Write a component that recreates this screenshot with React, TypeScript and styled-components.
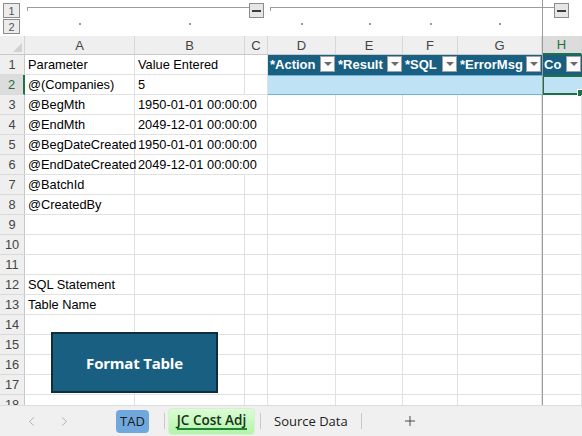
import styled, { createGlobalStyle, css } from "styled-components";
import { ChevronLeft, ChevronRight, Plus } from "lucide-react";

const COLS = "25px 110px 110px 23px 68px 67px 55px 84px 1fr";
const LETTERS = ["A", "B", "C", "D", "E", "F", "G", "H"];

type Row = { a?: string; b?: string };

const rows: Row[] = [
  { a: "Parameter", b: "Value Entered" },
  { a: "@(Companies)", b: "5" },
  { a: "@BegMth", b: "1950-01-01 00:00:00" },
  { a: "@EndMth", b: "2049-12-01 00:00:00" },
  { a: "@BegDateCreated", b: "1950-01-01 00:00:00" },
  { a: "@EndDateCreated", b: "2049-12-01 00:00:00" },
  { a: "@BatchId" },
  { a: "@CreatedBy" },
  {},
  {},
  {},
  { a: "SQL Statement" },
  { a: "Table Name" },
  {},
  {},
  {},
  {},
  {},
];

const tableHeads = ["*Action", "*Result", "*SQL", "*ErrorMsg", "Co"];

// dates are wider than column B and spill into the empty C column
const spills = (text?: string) => !!text && text.length > 15;

const App = () => {
  return (
    <Page>
      <GlobalStyle />
      <OutlineBar>
        <LevelButtons>
          <LevelButton>1</LevelButton>
          <LevelButton>2</LevelButton>
        </LevelButtons>
        <Group $from={2} $to={5} $padRight={4}>
          <GroupLine />
          <CollapseButton>
            <MinusBar />
          </CollapseButton>
        </Group>
        <Group $from={5} $to={10} $padRight={13}>
          <GroupLine />
          <CollapseButton>
            <MinusBar />
          </CollapseButton>
        </Group>
        {[2, 3, 5, 6, 7, 8].map((c) => (
          <DotCell key={c} $col={c}>
            <Dot />
          </DotCell>
        ))}
      </OutlineBar>

      <Sheet>
        <Grid>
          <Corner />
          {LETTERS.map((l) => (
            <ColHeader key={l} $active={l === "H"}>
              {l}
            </ColHeader>
          ))}

          {rows.map((row, i) => {
            const n = i + 1;
            return [
              <RowHeader key={`h${n}`} $active={n === 2}>
                {n}
              </RowHeader>,
              <Cell key={`a${n}`}>{row.a}</Cell>,
              <Cell key={`b${n}`} $spill={spills(row.b)}>
                {row.b}
              </Cell>,
              <Cell key={`c${n}`} />,
              ...[0, 1, 2, 3, 4].map((k) => {
                if (n === 1)
                  return (
                    <HeadCell key={`t${n}${k}`}>
                      <HeadText>{tableHeads[k]}</HeadText>
                      <FilterButton>
                        <FilterArrow />
                      </FilterButton>
                    </HeadCell>
                  );
                if (n === 2)
                  return k === 4 ? (
                    <SelectedCell key={`t${n}${k}`} />
                  ) : (
                    <BandCell key={`t${n}${k}`} />
                  );
                return <Cell key={`t${n}${k}`} />;
              }),
            ];
          })}
        </Grid>
        <FormatButton>Format Table</FormatButton>
      </Sheet>

      <TabBar>
        <NavGroup>
          <ChevronLeft size={15} strokeWidth={1.4} color="#a6a6a6" />
          <ChevronRight size={15} strokeWidth={1.4} color="#a6a6a6" />
        </NavGroup>
        <ColorTab>TAD</ColorTab>
        <Separator />
        <ActiveTab>
          JC Cost Adj
          <Underline />
        </ActiveTab>
        <Separator />
        <SheetTab>Source Data</SheetTab>
        <Separator />
        <AddTab>
          <Plus size={16} strokeWidth={1.3} color="#333" />
        </AddTab>
      </TabBar>

      <FreezeLine />
    </Page>
  );
};

export default App;

const GlobalStyle = createGlobalStyle`
  html, body {
    margin: 0;
    padding: 0;
    background: #ffffff;
  }
  body {
    font-family: "Liberation Sans", Arial, sans-serif;
  }
  * {
    box-sizing: border-box;
  }
`;

const Page = styled.div`
  position: relative;
  width: 582px;
  height: 436px;
  display: flex;
  flex-direction: column;
  overflow: hidden;
  background: #ffffff;
`;

const OutlineBar = styled.div`
  height: 36px;
  display: grid;
  grid-template-columns: ${COLS};
  grid-template-rows: 18px 18px;
`;

const LevelButtons = styled.div`
  grid-column: 1;
  grid-row: 1 / 3;
  display: flex;
  flex-direction: column;
  gap: 1px;
  padding: 3px 0 0 3px;
`;

const LevelButton = styled.div`
  width: 17px;
  height: 15px;
  border: 1px solid #8c8c8c;
  background: #ececec;
  color: #555;
  font-size: 11px;
  display: flex;
  align-items: center;
  justify-content: center;
`;

const Group = styled.div<{ $from: number; $to: number; $padRight: number }>`
  grid-row: 1;
  grid-column: ${(p) => p.$from} / ${(p) => p.$to};
  display: flex;
  align-items: flex-start;
  padding: 3px ${(p) => p.$padRight}px 0 2px;
`;

const GroupLine = styled.div`
  flex: 1;
  margin-top: 4px;
  height: 4px;
  border-top: 1px solid #9c9c9c;
  border-left: 1px solid #9c9c9c;
`;

const CollapseButton = styled.div`
  width: 15px;
  height: 15px;
  border: 1px solid #8c8c8c;
  background: #e6e6e6;
  display: flex;
  align-items: center;
  justify-content: center;
`;

const MinusBar = styled.div`
  width: 9px;
  height: 2px;
  background: #3c3c3c;
`;

const DotCell = styled.div<{ $col: number }>`
  grid-row: 2;
  grid-column: ${(p) => p.$col};
  display: flex;
  justify-content: center;
  padding-top: 5px;
`;

const Dot = styled.div`
  width: 2px;
  height: 2px;
  background: #9a9a9a;
`;

const Sheet = styled.div`
  position: relative;
  flex: 1;
  overflow: hidden;
`;

const Grid = styled.div`
  display: grid;
  grid-template-columns: ${COLS};
  grid-template-rows: 19px;
  grid-auto-rows: 20px;
  font-size: 12.8px;
`;

const headerBase = css`
  background: #efefef;
  color: #444;
  display: flex;
  align-items: center;
  justify-content: center;
  font-size: 13px;
`;

const Corner = styled.div`
  ${headerBase};
  position: relative;
  border-right: 1px solid #d4d4d4;
  border-bottom: 1px solid #c8c8c8;

  &::after {
    content: "";
    position: absolute;
    right: 2px;
    bottom: 2px;
    border-left: 9px solid transparent;
    border-bottom: 9px solid #d2d2d2;
  }
`;

const ColHeader = styled.div<{ $active?: boolean }>`
  ${headerBase};
  border-right: 1px solid #d8d8d8;
  border-bottom: ${(p) => (p.$active ? "2px solid #1e7145" : "1px solid #c8c8c8")};
  ${(p) =>
    p.$active &&
    css`
      background: #dcdcdc;
      color: #1e7145;
    `}
`;

const RowHeader = styled.div<{ $active?: boolean }>`
  ${headerBase};
  font-size: 12.8px;
  border-bottom: 1px solid #dadada;
  border-right: ${(p) => (p.$active ? "2px solid #1e7145" : "1px solid #c8c8c8")};
  ${(p) =>
    p.$active &&
    css`
      background: #dcdcdc;
      color: #1e7145;
    `}
`;

const Cell = styled.div<{ $spill?: boolean }>`
  display: flex;
  align-items: flex-end;
  padding: 0 0 2px 3px;
  border-right: 1px solid ${(p) => (p.$spill ? "transparent" : "#e1e1e1")};
  border-bottom: 1px solid #e1e1e1;
  color: #000;
  white-space: nowrap;
  overflow: visible;
  position: relative;
  z-index: ${(p) => (p.$spill ? 1 : 0)};
`;

const HeadCell = styled.div`
  display: flex;
  align-items: flex-start;
  justify-content: space-between;
  padding: 1px 1px 0 2px;
  background: #185f81;
  color: #ffffff;
  font-weight: 700;
  font-size: 13px;
  overflow: hidden;
  white-space: nowrap;
`;

const HeadText = styled.span`
  line-height: 18px;
`;

const FilterButton = styled.div`
  flex: none;
  width: 15px;
  height: 16px;
  background: #fbfbfb;
  border: 1px solid #a0a0a0;
  display: flex;
  align-items: center;
  justify-content: center;
`;

const FilterArrow = styled.div`
  border-left: 4px solid transparent;
  border-right: 4px solid transparent;
  border-top: 4px solid #6a6a6a;
`;

const BandCell = styled.div`
  background: #bfe3f4;
  border-top: 1px solid #6fb3da;
  border-bottom: 1px solid #6fb3da;
`;

const SelectedCell = styled.div`
  position: relative;
  background: #bfe3f4;
  border: 2px solid #1e7145;
  border-right: none;

  &::after {
    content: "";
    position: absolute;
    right: -3px;
    bottom: -4px;
    width: 6px;
    height: 6px;
    background: #1e7145;
    border: 1px solid #ffffff;
  }
`;

const FormatButton = styled.div`
  position: absolute;
  left: 51px;
  top: 296px;
  width: 167px;
  height: 61px;
  background: #185f81;
  border: 2px solid #0f2d3b;
  color: #ffffff;
  font-family: "Open Sans", sans-serif;
  font-weight: 700;
  font-size: 15px;
  letter-spacing: -0.2px;
  display: flex;
  align-items: center;
  justify-content: center;
`;

const TabBar = styled.div`
  height: 31px;
  flex: none;
  display: flex;
  align-items: center;
  background: #f0f0f0;
  border-top: 1px solid #dcdcdc;
  font-family: "Open Sans", sans-serif;
  font-size: 13px;
  color: #222;
`;

const NavGroup = styled.div`
  width: 116px;
  display: flex;
  align-items: center;
  gap: 18px;
  padding-left: 24px;
`;

const ColorTab = styled.div`
  width: 33px;
  height: 23px;
  border-radius: 4px;
  background: #70a8de;
  color: #1a1a1a;
  display: flex;
  align-items: center;
  justify-content: center;
  margin-right: 15px;
`;

const Separator = styled.div`
  width: 1px;
  height: 16px;
  background: #c8c8c8;
`;

const ActiveTab = styled.div`
  position: relative;
  width: 87px;
  height: 27px;
  margin: 0 5px 0 3px;
  border-radius: 4px;
  border: 1px solid #d6efd2;
  background: linear-gradient(#dcfcd5, #b2f5a8);
  color: #17331a;
  font-weight: 600;
  font-size: 13.5px;
  display: flex;
  align-items: center;
  justify-content: center;
  padding-bottom: 2px;
`;

const Underline = styled.div`
  position: absolute;
  left: 8px;
  right: 7px;
  bottom: 4px;
  height: 2px;
  background: #22803a;
`;

const SheetTab = styled.div`
  padding: 0 13px;
`;

const AddTab = styled.div`
  width: 96px;
  display: flex;
  justify-content: center;
`;

const FreezeLine = styled.div`
  position: absolute;
  left: 542px;
  top: 0;
  width: 1px;
  height: 405px;
  background: #9c9c9c;
`;
